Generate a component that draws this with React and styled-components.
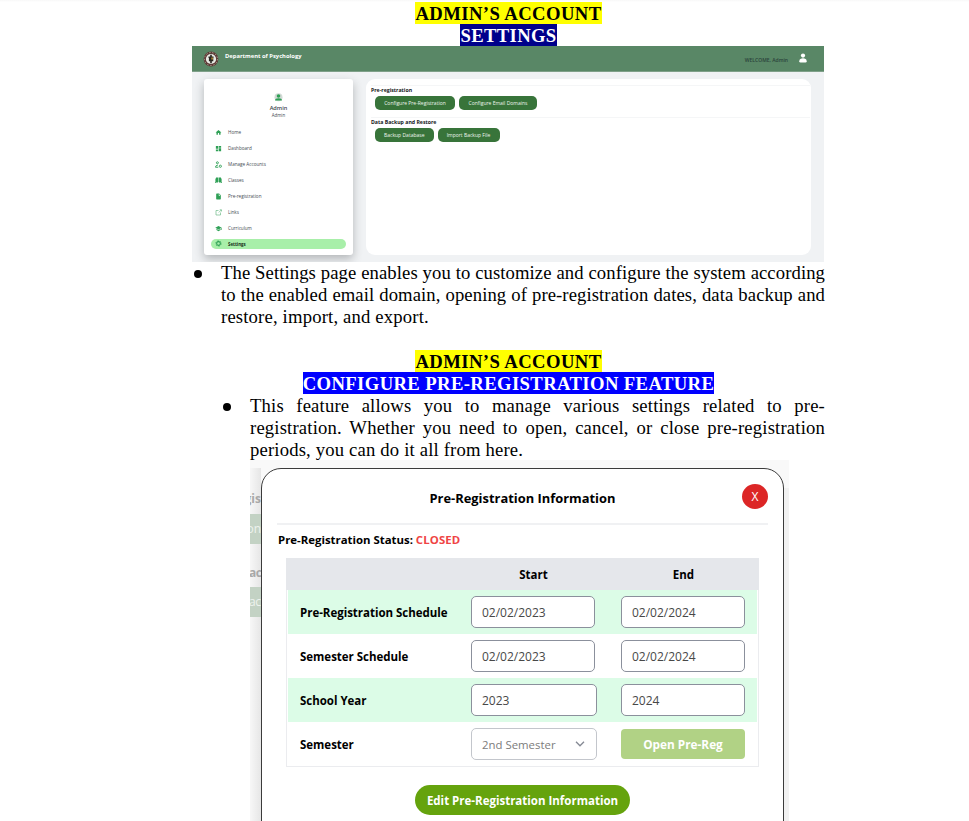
import React from "react";
import styled, { createGlobalStyle, css } from "styled-components";
import { MdHome, MdDashboard, MdInsertDriveFile, MdSchool } from "react-icons/md";

const Global = createGlobalStyle`
  *, *::before, *::after { box-sizing: border-box; }
  html, body { margin: 0; background: #fff; }
  body { height: 821px; overflow: hidden; }
`;

const sans = `"Open Sans", "Noto Sans", sans-serif`;

const Page = styled.main`
  width: 969px;
  height: 821px;
  overflow: hidden;
  padding: 2px 144px 0 192px;
  background: linear-gradient(#f8f8f8, #fff 2px);
  color: #000;
  font-family: "Liberation Serif", "Times New Roman", serif;
  font-size: 18.67px;
  line-height: 22px;
`;

const Title = styled.h2`
  margin: 0;
  height: 22px;
  display: flex;
  justify-content: center;
  font-size: 18.67px;
  line-height: 24px;
  font-weight: 700;
  white-space: nowrap;
`;

const Mark = styled.span`
  height: 22px;
  background: ${(p) => p.$bg};
  color: ${(p) => p.$fg || "#000"};
  letter-spacing: ${(p) => p.$ls || "0.42px"};
`;

const Bullet = styled.div`
  display: grid;
  grid-template-columns: 29px 1fr;
  margin-left: ${(p) => (p.$nested ? "29px" : "0")};
  padding-top: ${(p) => (p.$nested ? "1px" : "0")};
  width: ${(p) => (p.$nested ? "604px" : "633px")};
`;

const Dot = styled.i`
  width: 8px;
  height: 8px;
  margin: 8px 0 0 2px;
  border-radius: 50%;
  background: #000;
`;

const Line = styled.div`
  height: 22px;
  white-space: nowrap;
  text-align: left;
  text-align-last: ${(p) => (p.$last ? "left" : "justify")};
  letter-spacing: ${(p) => (p.$tight ? "0.09px" : "0.17px")};
`;

const Shot = styled.section`
  width: 632px;
  height: 216px;
  background: #f0f2f4;
  overflow: hidden;
  font-family: ${sans};
  line-height: 1;
`;

const TopBar = styled.header`
  height: 26px;
  display: flex;
  align-items: flex-start;
  padding: 5px 17px 0 11px;
  background: #598766;
  border-bottom: 1px solid #7fa089;
`;

const Brand = styled.b`
  margin: 1px auto 0 6px;
  font-size: 5.8px;
  line-height: 8px;
  color: #fff;
  white-space: nowrap;
`;

const Welcome = styled.span`
  margin: 5px 11px 0 0;
  font-size: 5px;
  line-height: 8px;
  font-weight: 600;
  color: #2b433b;
  white-space: nowrap;
`;

const Panels = styled.div`
  display: flex;
  gap: 13px;
  padding: 7px 0 0 12px;
`;

const Side = styled.nav`
  width: 149px;
  height: 176px;
  padding: 14px 7px 0;
  border-radius: 3px;
  background: #fff;
  box-shadow: 0 4px 10px rgba(50, 55, 60, 0.32);
`;

const Profile = styled.div`
  height: 28.5px;
  display: flex;
  flex-direction: column;
  align-items: center;
  white-space: nowrap;
  color: #404650;
`;

const Name = styled.span`
  margin-top: ${(p) => (p.$small ? "0" : "3px")};
  font-size: ${(p) => (p.$small ? "4.4px" : "5.6px")};
  font-weight: ${(p) => (p.$small ? 500 : 600)};
  line-height: 7px;
`;

const Item = styled.a`
  height: 9.4px;
  margin-top: 6.5px;
  padding-left: 3.5px;
  display: flex;
  align-items: center;
  gap: 6.5px;
  border-radius: 5px;
  color: ${(p) => (p.$active ? "#16301a" : "#444b52")};
  background: ${(p) => (p.$active ? "#a8efa9" : "transparent")};
  font-size: ${(p) => (p.$active ? "4.4px" : "4.6px")};
  font-weight: ${(p) => (p.$active ? 700 : 500)};
  white-space: nowrap;
  svg { width: 7px; height: 7px; color: #2fa056; flex: none; }
`;

const Content = styled.div`
  width: 445px;
  height: 176px;
  padding: 6px 1px 0 5px;
  border-radius: 9px;
  background: #fff;
`;

const Group = styled.div`
  height: 32px;
  padding-top: 1px;
  border-top: 1px solid #f5f6f7;
`;

const GroupTitle = styled.b`
  display: block;
  font-size: 5.2px;
  line-height: 6px;
  color: #16181b;
  white-space: nowrap;
`;

const Buttons = styled.div`
  display: flex;
  gap: 4px;
  padding: 3px 0 0 4px;
`;

const MiniButton = styled.button`
  width: ${(p) => p.$w}px;
  height: 14px;
  padding: 0;
  border: 0;
  border-radius: 5px;
  background: #38743a;
  color: #eef5ee;
  font: 500 5px ${sans};
  white-space: nowrap;
`;

const ModalShot = styled.section`
  width: 539px;
  height: 361px;
  margin: -1px 0 0 58px;
  overflow: hidden;
  display: grid;
  grid-template-columns: 11px 523px 5px;
  background: #f9f9f9;
  padding-top: 8px;
  font-family: ${sans};
`;

const Behind = styled.div`
  height: 360px;
  overflow: hidden;
  padding-top: 20px;
  background: linear-gradient(to right, #f7f7f7, #e6e6e6);
  font-size: 12px;
`;

const Ghost = styled.div`
  height: ${(p) => p.$h}px;
  margin-bottom: ${(p) => p.$mb || 0}px;
  display: flex;
  justify-content: ${(p) => (p.$end ? "flex-end" : "flex-start")};
  line-height: ${(p) => p.$h}px;
  font-weight: ${(p) => (p.$fill ? 400 : 700)};
  text-indent: ${(p) => (p.$end ? "0" : "-1px")};
  letter-spacing: ${(p) => (p.$end ? "0" : "-0.5px")};
  background: ${(p) => (p.$fill ? "#c3d2c4" : "transparent")};
  color: ${(p) => (p.$fill ? "#eef2ee" : "#a8a8a8")};
`;

const BehindRight = styled.div`
  margin-top: 20px;
  background: #f1f1f1;
`;

const Modal = styled.div`
  height: 380px;
  padding: 14px 15px 0;
  border: 1px solid #3b3b3b;
  border-radius: 20px;
  background: #fff;
  color: #000;
`;

const ModalHead = styled.div`
  height: 42px;
  display: grid;
  grid-template-columns: 26px 1fr 26px;
  align-items: start;
  border-bottom: 2px solid #f0f1f3;
`;

const ModalTitle = styled.h3`
  margin: 5px 0 0;
  text-align: center;
  font-size: 12.9px;
  line-height: 21px;
  font-weight: 700;
  white-space: nowrap;
`;

const Close = styled.button`
  width: 26px;
  height: 25px;
  padding: 0;
  margin-top: 1px;
  border: 0;
  border-radius: 50%;
  background: #dc2626;
  color: #fff;
  font: 400 12px ${sans};
`;

const Status = styled.div`
  height: 33px;
  padding-left: 1px;
  line-height: 30px;
  font-size: 11.4px;
  font-weight: 700;
  white-space: nowrap;
  span { color: #ef4444; letter-spacing: 0.1px; }
`;

const Table = styled.div`
  width: 473px;
  height: 209px;
  margin-left: 9px;
  border: 1px solid #ebecef;
`;

const Row = styled.div`
  height: ${(p) => (p.$head ? 32 : 44)}px;
  display: grid;
  grid-template-columns: 171px 150px 124px;
  align-items: center;
  padding-left: 12px;
  margin: ${(p) => (p.$head ? "-1px -1px 0" : "0 1px")};
  ${(p) => p.$head && css`padding: 1px 0 0 14px;`}
  background: ${(p) => (p.$head ? "#e5e7eb" : p.$green ? "#dcfce7" : "#fff")};
  font-size: 11.5px;
  font-weight: 700;
  white-space: nowrap;
`;

const Label = styled.span`
  padding-top: 1px;
  letter-spacing: -0.02px;
`;

const ColHead = styled.span`
  text-align: center;
  width: 125px;
`;

const Field = styled.div`
  width: ${(p) => p.$w || 124}px;
  height: 32px;
  padding: 0 11px 0 10px;
  display: flex;
  align-items: center;
  justify-content: space-between;
  border: 1px solid ${(p) => (p.$muted ? "#c3c6cc" : "#8b909c")};
  border-radius: 5px;
  background: #fff;
  color: ${(p) => (p.$muted ? "#7c7c7c" : "#484848")};
  font-size: ${(p) => (p.$muted ? "11.4px" : "12px")};
  line-height: 17px;
  font-weight: 400;
`;

const OpenButton = styled.button`
  width: 124px;
  height: 30px;
  padding: 0;
  border: 0;
  border-radius: 4px;
  background: #b1d285;
  color: #fff;
  font: 700 11.8px ${sans};
`;

const EditButton = styled.button`
  display: block;
  width: 215px;
  height: 30px;
  margin: 18px 0 0 138px;
  padding: 0;
  border: 0;
  border-radius: 15px;
  background: #65a30d;
  color: #fff;
  font: 700 11.5px ${sans};
  white-space: nowrap;
`;

const Seal = () => (
  <svg width="16" height="16" viewBox="0 0 16 16">
    <circle cx="8" cy="8" r="7.4" fill="#5b3a35" />
    <circle cx="8" cy="8" r="6.5" fill="none" stroke="#b9aaa2" strokeWidth=".8" strokeDasharray="1.5 1.6" />
    <circle cx="8" cy="8" r="5.1" fill="#e9ebe5" />
    <path d="M8 3.8v8.400M5.500 6.200h1.200v3.300h2.800V6.200h1" fill="none" stroke="#27251f" strokeWidth="1.6" />
    <path d="M8.400 6.500h1.400v2H8.400z" fill="#c99b38" />
  </svg>
);

const UserIcon = styled(({ className }) => (
  <svg className={className} width="8" height="10" viewBox="0 0 8 10" fill="#fff">
    <circle cx="4" cy="2.6" r="2.1" />
    <path d="M.3 8.2C.3 6 2 5.2 4 5.2S7.700 6 7.700 8.200Q7.700 9.500 6.500 9.500h-5Q.3 9.500.3 8.200z" />
  </svg>
))`
  margin-top: 2px;
`;

const Avatar = () => (
  <svg width="9" height="9" viewBox="0 0 9 9">
    <circle cx="4.5" cy="4.3" r="4" fill="#d3dad6" />
    <circle cx="4.5" cy="3" r="1.8" fill="#2fa056" />
    <path d="M1 7.600Q1 5.300 4.500 5.300T8 7.600z" fill="#2fa056" />
  </svg>
);

const AccountsIcon = () => (
  <svg viewBox="0 0 14 14" fill="none" stroke="currentColor" strokeWidth="1.8">
    <circle cx="4.8" cy="3.5" r="2" />
    <path d="M6 8.500H4.500Q1 9 1 12.500H6.500" />
    <circle cx="10.7" cy="10.5" r="2.2" />
  </svg>
);

const ClassesIcon = () => (
  <svg viewBox="0 0 14 14" fill="currentColor">
    <path d="M0 3h1.200v8h5v1.200H0zM12.800 3H14v9.200H8V11h4.800zM2 1h4.500v9H2zM7.500 1H12v9H7.500z" />
  </svg>
);

const LinkIcon = () => (
  <svg viewBox="0 0 14 14" fill="none" stroke="currentColor" strokeWidth="1.2" opacity=".8">
    <path d="M7 3H2v9h9V7M7.500 7 12.500 2M9.500 1.500H13V5" />
  </svg>
);

const GearIcon = () => (
  <svg viewBox="0 0 14 14" fill="none" stroke="currentColor">
    <circle cx="7" cy="7" r="3.700" strokeWidth="2.2" />
    <circle cx="7" cy="7" r="5.400" strokeWidth="1.600" strokeDasharray="2.500 3.150" />
  </svg>
);

const Chevron = () => (
  <svg width="10" height="6" viewBox="0 0 10 6" fill="none" stroke="#858994" strokeWidth="1.3">
    <path d="M1 .8l4 4 4-4" />
  </svg>
);

const menu = [
  ["Home", MdHome],
  ["Dashboard", MdDashboard],
  ["Manage Accounts", AccountsIcon],
  ["Classes", ClassesIcon],
  ["Pre-registration", MdInsertDriveFile],
  ["Links", LinkIcon],
  ["Curriculum", MdSchool],
  ["Settings", GearIcon],
];

const Spacer = styled.div`
  height: 22px;
`;

export default function App() {
  return (
    <Page>
      <Global />
      <Title><Mark $bg="#ffff00">ADMIN’S ACCOUNT</Mark></Title>
      <Title><Mark $bg="#00008b" $fg="#fff" $ls="0.35px">SETTINGS</Mark></Title>
      <Shot>
        <TopBar>
          <Seal />
          <Brand>Department of Psychology</Brand>
          <Welcome>WELCOME, Admin</Welcome>
          <UserIcon />
        </TopBar>
        <Panels>
          <Side>
            <Profile>
              <Avatar />
              <Name>Admin</Name>
              <Name $small>Admin</Name>
            </Profile>
            {menu.map(([label, Icon]) => (
              <Item key={label} $active={label === "Settings"}>
                <Icon />
                {label}
              </Item>
            ))}
          </Side>
          <Content>
            <Group>
              <GroupTitle>Pre-registration</GroupTitle>
              <Buttons>
                <MiniButton $w={80}>Configure Pre-Registration</MiniButton>
                <MiniButton $w={78}>Configure Email Domains</MiniButton>
              </Buttons>
            </Group>
            <Group>
              <GroupTitle>Data Backup and Restore</GroupTitle>
              <Buttons>
                <MiniButton $w={58.5}>Backup Database</MiniButton>
                <MiniButton $w={62}>Import Backup File</MiniButton>
              </Buttons>
            </Group>
          </Content>
        </Panels>
      </Shot>
      <Bullet>
        <Dot />
        <div>
          <Line $tight>The Settings page enables you to customize and configure the system according</Line>
          <Line $tight>to the enabled email domain, opening of pre-registration dates, data backup and</Line>
          <Line $last>restore, import, and export.</Line>
        </div>
      </Bullet>
      <Spacer />
      <Title><Mark $bg="#ffff00">ADMIN’S ACCOUNT</Mark></Title>
      <Title><Mark $bg="#0000ff" $fg="#fff" $ls="0.39px">CONFIGURE PRE-REGISTRATION FEATURE</Mark></Title>
      <Bullet $nested>
        <Dot />
        <div>
          <Line>This feature allows you to manage various settings related to pre-</Line>
          <Line>registration. Whether you need to open, cancel, or close pre-registration</Line>
          <Line $last>periods, you can do it all from here.</Line>
        </div>
      </Bullet>
      <ModalShot>
        <Behind>
          <Ghost $h={22} $mb={4} $end>gis</Ghost>
          <Ghost $h={30} $mb={18} $fill $end>on</Ghost>
          <Ghost $h={22} $mb={3}>ack</Ghost>
          <Ghost $h={30} $fill>ack</Ghost>
        </Behind>
        <Modal>
          <ModalHead>
            <span />
            <ModalTitle>Pre-Registration Information</ModalTitle>
            <Close>X</Close>
          </ModalHead>
          <Status>Pre-Registration Status: <span>CLOSED</span></Status>
          <Table>
            <Row $head>
              <span />
              <ColHead>Start</ColHead>
              <ColHead>End</ColHead>
            </Row>
            <Row $green>
              <Label>Pre-Registration Schedule</Label>
              <Field>02/02/2023</Field>
              <Field>02/02/2024</Field>
            </Row>
            <Row>
              <Label>Semester Schedule</Label>
              <Field>02/02/2023</Field>
              <Field>02/02/2024</Field>
            </Row>
            <Row $green>
              <Label>School Year</Label>
              <Field $w={126}>2023</Field>
              <Field>2024</Field>
            </Row>
            <Row>
              <Label>Semester</Label>
              <Field $w={126} $muted>2nd Semester<Chevron /></Field>
              <OpenButton>Open Pre-Reg</OpenButton>
            </Row>
          </Table>
          <EditButton>Edit Pre-Registration Information</EditButton>
        </Modal>
        <BehindRight />
      </ModalShot>
    </Page>
  );
}
